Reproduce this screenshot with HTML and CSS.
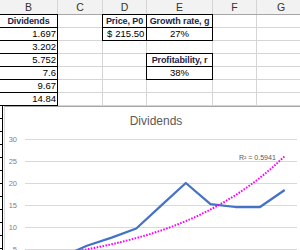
FILE: index.html
```html
<!DOCTYPE html>
<html>
<head>
<meta charset="utf-8">
<link rel="stylesheet" href="styles.css">
</head>
<body>
<div class="sheet">
  <div class="cols">
    <div class="ch">B</div><div class="ch">C</div><div class="ch">D</div><div class="ch">E</div><div class="ch">F</div><div class="ch">G</div>
  </div>
  <div class="cells">
    <div class="c bx hd">Dividends</div><div class="c"></div><div class="c bx hd">Price, P0</div><div class="c bx hd">Growth rate, g</div><div class="c"></div><div class="c"></div>
    <div class="c bx num">1.697</div><div class="c"></div><div class="c bx acc"><span>$</span><span>215.50</span></div><div class="c bx ctr">27%</div><div class="c"></div><div class="c"></div>
    <div class="c bx num">3.202</div><div class="c"></div><div class="c"></div><div class="c"></div><div class="c"></div><div class="c"></div>
    <div class="c bx num">5.752</div><div class="c"></div><div class="c"></div><div class="c bx hd">Profitability, r</div><div class="c"></div><div class="c"></div>
    <div class="c bx num">7.6</div><div class="c"></div><div class="c"></div><div class="c bx ctr">38%</div><div class="c"></div><div class="c"></div>
    <div class="c bx num">9.67</div><div class="c"></div><div class="c"></div><div class="c"></div><div class="c"></div><div class="c"></div>
    <div class="c bx num">14.84</div><div class="c"></div><div class="c"></div><div class="c"></div><div class="c"></div><div class="c"></div>
  </div>
  <div class="lower">
    <div class="edge"></div>
    <div class="chart">
      <svg class="plot" width="295" height="143" viewBox="5 107 295 143">
        <g class="gridlines">
          <line x1="25" y1="139.5" x2="297" y2="139.5"/>
          <line x1="25" y1="161.5" x2="297" y2="161.5"/>
          <line x1="25" y1="183.5" x2="297" y2="183.5"/>
          <line x1="25" y1="205.5" x2="297" y2="205.5"/>
          <line x1="25" y1="227.5" x2="297" y2="227.5"/>
          <line x1="25" y1="249.5" x2="297" y2="249.5"/>
        </g>
        <g class="ylabels">
          <text x="17" y="142">30</text>
          <text x="17" y="164">25</text>
          <text x="17" y="186">20</text>
          <text x="17" y="208">15</text>
          <text x="17" y="230">10</text>
          <text x="17" y="251.5">5</text>
        </g>
        <text class="title" x="156" y="125">Dividends</text>
        <polyline class="series" points="37.4,263.5 62.1,256.9 86.9,245.7 111.6,237.6 136.3,228.5 161.1,205.7 185.8,183 210.5,204.1 235.3,207 260,207 284.7,190"/>
        <polyline class="trend" points="37.4,256.7 49.8,255.1 62.1,253.4 74.5,251.5 86.9,249.3 99.2,246.9 111.6,244.3 124,241.3 136.3,238.1 148.7,234.5 161.1,230.5 173.4,226.1 185.8,221.1 198.2,215.7 210.5,209.5 222.9,202.8 235.3,195.3 247.6,187 260,177.8 272.3,167.6 284.7,156.2"/>
        <text class="r2" x="239" y="159.5">R² = 0.5941</text>
      </svg>
    </div>
  </div>
</div>
</body>
</html>
```

FILE: styles.css
```css
html, body {
  margin: 0;
  padding: 0;
  background: #ffffff;
}
body {
  width: 300px;
  height: 250px;
  overflow: hidden;
  font-family: "Liberation Sans", Arial, sans-serif;
}
.sheet {
  width: 300px;
}
.cols {
  display: grid;
  grid-template-columns: 57px 44px 43px 65px 43px 48px;
  column-gap: 1px;
  background: #d5d5d5;
  border-bottom: 1px solid #a6a6a6;
  height: 14px;
}
.ch {
  background: #f2f2f2;
  color: #333333;
  font-size: 10.5px;
  line-height: 14px;
  text-align: center;
}
.cells {
  display: grid;
  grid-template-columns: 57px 44px 43px 65px 43px 48px;
  grid-auto-rows: 12px;
  gap: 1px;
  background: #d5d5d5;
  padding-bottom: 1px;
}
.c {
  background: #ffffff;
  font-size: 9.5px;
  line-height: 12px;
  color: #000000;
  white-space: nowrap;
  padding: 0 1px;
  overflow: visible;
}
.bx {
  outline: 1px solid #000000;
  position: relative;
}
.hd {
  font-weight: bold;
  color: #1d2545;
  text-align: center;
  font-size: 9px;
  letter-spacing: -0.1px;
  padding: 0;
}
.num {
  text-align: right;
}
.ctr {
  text-align: center;
}
.acc {
  display: flex;
  gap: 3px;
  padding: 0 0 0 4px;
}
.lower {
  display: flex;
  height: 144px;
}
.edge {
  border-right: 1px solid #000000;
  box-sizing: border-box;
  width: 3px;
  background: repeating-linear-gradient(to bottom, transparent 0, transparent 12px, #000000 12px, #000000 13px);
}
.chart {
  flex: 1;
  border-left: 1px solid #d9d9d9;
  border-top: 1px solid #a6a6a6;
  margin-left: 1px;
  background: #ffffff;
}
.plot {
  display: block;
}
.gridlines line {
  stroke: #d9d9d9;
  stroke-width: 1;
}
.ylabels text {
  font-family: "Liberation Sans", Arial, sans-serif;
  font-size: 7.5px;
  fill: #7f7f7f;
  text-anchor: end;
}
.title {
  font-family: "Liberation Sans", Arial, sans-serif;
  font-size: 12px;
  fill: #595959;
  text-anchor: middle;
}
.series {
  fill: none;
  stroke: #4472c4;
  stroke-width: 2.25;
  stroke-linejoin: round;
}
.trend {
  fill: none;
  stroke: #ff00ff;
  stroke-width: 2;
  stroke-dasharray: 1.6 1.4;
}
.r2 {
  font-family: "Liberation Sans", Arial, sans-serif;
  font-size: 7px;
  fill: #595959;
}
```
